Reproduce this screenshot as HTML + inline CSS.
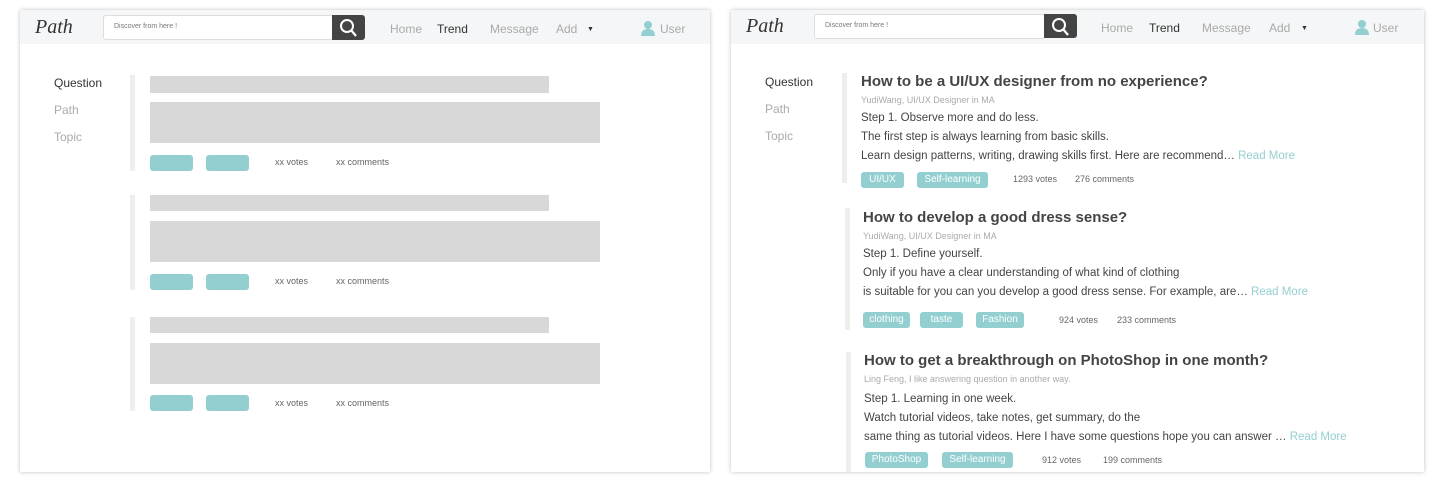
<!DOCTYPE html>
<html><head><meta charset="utf-8"><style>
*{margin:0;padding:0;box-sizing:border-box}
body{width:1440px;height:480px;background:#fff;position:relative;overflow:hidden;font-family:"Liberation Sans",Arial,sans-serif}
.p{position:absolute;background:#fff;box-shadow:0 0 4px rgba(0,0,0,.25)}
.hd{position:absolute;left:0;top:0;right:0;height:34px;background:#f5f6f7}
.a{position:absolute;white-space:nowrap;line-height:1}
.logo{font-family:"Liberation Serif",serif;font-style:italic;font-size:20px;color:#333}
.sb{position:absolute;background:#fff;border:1px solid #ddd;border-radius:3px;font-size:7px;color:#777;padding:7px 10px}
.btn{position:absolute;background:#444;border-radius:0 3px 3px 0}
.nav{font-size:12px;color:#aaa}
.bl{position:absolute;width:5px;background:#eee}
.g{position:absolute;background:#d8d8d8}
.tg{position:absolute;background:#93cfd1;border-radius:3px;color:#fff;font-size:10px;line-height:1;padding-top:3px;text-align:center;white-space:nowrap}
.sm{font-size:9px;color:#666}
.ttl{font-size:15px;font-weight:bold;color:#444}
.au{font-size:9px;color:#aaa}
.tx{font-size:11.5px;color:#444}
.rm{color:#93cfd1}
</style></head><body>

<div class="p" style="left:20px;top:10px;width:690px;height:462px">
 <div class="hd"></div>
 <div class="a logo" style="left:15px;top:7px">Path</div>
 <div class="sb" style="left:83px;top:5px;width:230px;height:25px">Discover from here !</div>
 <div class="btn" style="left:312px;top:5px;width:33px;height:25px"><svg width="33" height="25"><circle cx="15" cy="11" r="6" fill="none" stroke="#fff" stroke-width="2"/><line x1="19" y1="15" x2="24" y2="21" stroke="#fff" stroke-width="2.2"/></svg></div>
 <div class="a nav" style="left:370px;top:13px">Home</div>
 <div class="a nav" style="left:417px;top:13px;color:#333">Trend</div>
 <div class="a nav" style="left:470px;top:13px">Message</div>
 <div class="a nav" style="left:536px;top:13px">Add</div>
 <div class="a" style="left:567px;top:16px;font-size:7px;color:#333">▼</div>
 <svg class="a" style="left:620px;top:10px" width="16" height="16"><circle cx="8" cy="5" r="4" fill="#93cfd1"/><path d="M1 16 Q1 9 8 9 Q15 9 15 16Z" fill="#93cfd1"/></svg>
 <div class="a nav" style="left:640px;top:13px">User</div>

 <div class="a" style="left:34px;top:67px;font-size:12px;color:#333">Question</div>
 <div class="a" style="left:34px;top:94px;font-size:12px;color:#aaa">Path</div>
 <div class="a" style="left:34px;top:121px;font-size:12px;color:#aaa">Topic</div>

 <div class="bl" style="left:110px;top:65px;height:96px"></div>
 <div class="g" style="left:130px;top:66px;width:399px;height:17px"></div>
 <div class="g" style="left:130px;top:92px;width:450px;height:41px"></div>
 <div class="tg" style="left:130px;top:145px;width:43px;height:16px"></div>
 <div class="tg" style="left:186px;top:145px;width:43px;height:16px"></div>
 <div class="a sm" style="left:255px;top:148px">xx votes</div>
 <div class="a sm" style="left:316px;top:148px">xx comments</div>

 <div class="bl" style="left:110px;top:185px;height:95px"></div>
 <div class="g" style="left:130px;top:185px;width:399px;height:16px"></div>
 <div class="g" style="left:130px;top:211px;width:450px;height:41px"></div>
 <div class="tg" style="left:130px;top:264px;width:43px;height:16px"></div>
 <div class="tg" style="left:186px;top:264px;width:43px;height:16px"></div>
 <div class="a sm" style="left:255px;top:267px">xx votes</div>
 <div class="a sm" style="left:316px;top:267px">xx comments</div>

 <div class="bl" style="left:110px;top:307px;height:94px"></div>
 <div class="g" style="left:130px;top:307px;width:399px;height:16px"></div>
 <div class="g" style="left:130px;top:333px;width:450px;height:41px"></div>
 <div class="tg" style="left:130px;top:385px;width:43px;height:16px"></div>
 <div class="tg" style="left:186px;top:385px;width:43px;height:16px"></div>
 <div class="a sm" style="left:255px;top:389px">xx votes</div>
 <div class="a sm" style="left:316px;top:389px">xx comments</div>
</div>

<div class="p" style="left:731px;top:10px;width:693px;height:462px">
 <div class="hd"></div>
 <div class="a logo" style="left:15px;top:6px">Path</div>
 <div class="sb" style="left:83px;top:4px;width:231px;height:25px">Discover from here !</div>
 <div class="btn" style="left:313px;top:4px;width:33px;height:24px"><svg width="33" height="24"><circle cx="15" cy="11" r="6" fill="none" stroke="#fff" stroke-width="2"/><line x1="19" y1="15" x2="24" y2="21" stroke="#fff" stroke-width="2.2"/></svg></div>
 <div class="a nav" style="left:370px;top:12px">Home</div>
 <div class="a nav" style="left:418px;top:12px;color:#333">Trend</div>
 <div class="a nav" style="left:471px;top:12px">Message</div>
 <div class="a nav" style="left:538px;top:12px">Add</div>
 <div class="a" style="left:570px;top:15px;font-size:7px;color:#333">▼</div>
 <svg class="a" style="left:623px;top:9px" width="16" height="16"><circle cx="8" cy="5" r="4" fill="#93cfd1"/><path d="M1 16 Q1 9 8 9 Q15 9 15 16Z" fill="#93cfd1"/></svg>
 <div class="a nav" style="left:642px;top:12px">User</div>

 <div class="a" style="left:34px;top:66px;font-size:12px;color:#333">Question</div>
 <div class="a" style="left:34px;top:93px;font-size:12px;color:#aaa">Path</div>
 <div class="a" style="left:34px;top:120px;font-size:12px;color:#aaa">Topic</div>

 <div class="bl" style="left:111px;top:63px;height:110px"></div>
 <div class="a ttl" style="left:130px;top:64px">How to be a UI/UX designer from no experience?</div>
 <div class="a au" style="left:130px;top:86px">YudiWang, UI/UX Designer in MA</div>
 <div class="a tx" style="left:130px;top:103px">Step 1. Observe more and do less.</div>
 <div class="a tx" style="left:130px;top:122px">The first step is always learning from basic skills.</div>
 <div class="a tx" style="left:130px;top:141px">Learn design patterns, writing, drawing skills first. Here are recommend… <span class="rm">Read More</span></div>
 <div class="tg" style="left:130px;top:162px;width:43px;height:16px">UI/UX</div>
 <div class="tg" style="left:186px;top:162px;width:71px;height:16px">Self-learning</div>
 <div class="a sm" style="left:282px;top:165px">1293 votes</div>
 <div class="a sm" style="left:344px;top:165px">276 comments</div>

 <div class="bl" style="left:114px;top:198px;height:122px"></div>
 <div class="a ttl" style="left:132px;top:200px">How to develop a good dress sense?</div>
 <div class="a au" style="left:132px;top:222px">YudiWang, UI/UX Designer in MA</div>
 <div class="a tx" style="left:132px;top:239px">Step 1. Define yourself.</div>
 <div class="a tx" style="left:132px;top:258px">Only if you have a clear understanding of what kind of clothing</div>
 <div class="a tx" style="left:132px;top:277px">is suitable for you can you develop a good dress sense. For example, are… <span class="rm">Read More</span></div>
 <div class="tg" style="left:132px;top:302px;width:47px;height:16px">clothing</div>
 <div class="tg" style="left:189px;top:302px;width:43px;height:16px">taste</div>
 <div class="tg" style="left:245px;top:302px;width:48px;height:16px">Fashion</div>
 <div class="a sm" style="left:328px;top:306px">924 votes</div>
 <div class="a sm" style="left:386px;top:306px">233 comments</div>

 <div class="bl" style="left:115px;top:342px;height:120px"></div>
 <div class="a ttl" style="left:133px;top:343px">How to get a breakthrough on PhotoShop in one month?</div>
 <div class="a au" style="left:133px;top:365px">Ling Feng, I like answering question in another way.</div>
 <div class="a tx" style="left:133px;top:384px">Step 1. Learning in one week.</div>
 <div class="a tx" style="left:133px;top:403px">Watch tutorial videos, take notes, get summary, do the</div>
 <div class="a tx" style="left:133px;top:422px">same thing as tutorial videos. Here I have some questions hope you can answer … <span class="rm">Read More</span></div>
 <div class="tg" style="left:134px;top:442px;width:63px;height:16px">PhotoShop</div>
 <div class="tg" style="left:211px;top:442px;width:71px;height:16px">Self-learning</div>
 <div class="a sm" style="left:311px;top:446px">912 votes</div>
 <div class="a sm" style="left:372px;top:446px">199 comments</div>
</div>
</body></html>
